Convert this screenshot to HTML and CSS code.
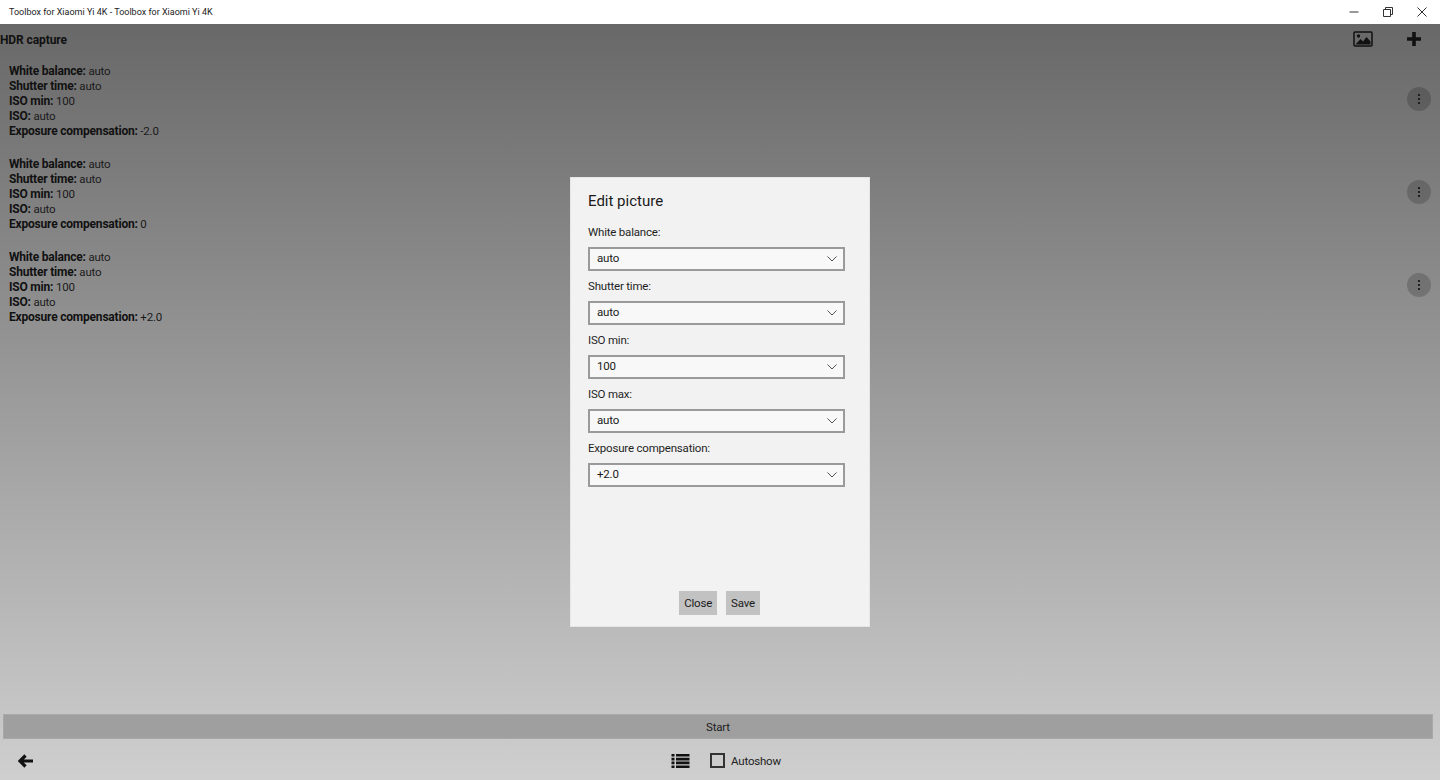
FILE: index.html
```html
<!DOCTYPE html>
<html lang="en">
<head>
<meta charset="utf-8">
<title>Toolbox for Xiaomi Yi 4K</title>
<link rel="stylesheet" href="styles.css">
</head>
<body>
<div class="window">
  <header class="titlebar">
    <span class="title">Toolbox for Xiaomi Yi 4K - Toolbox for Xiaomi Yi 4K</span>
    <div class="caption">
      <svg class="cap" viewBox="0 0 12 12"><path d="M1.5 6h9" /></svg>
      <svg class="cap" viewBox="0 0 12 12"><path d="M1.5 3.5h7v7h-7zM3.5 3.5v-2h7v7h-2" /></svg>
      <svg class="cap" viewBox="0 0 12 12"><path d="M1.5 1.5l9 9M10.5 1.5l-9 9" /></svg>
    </div>
  </header>
  <main class="app">
    <div class="topbar">
      <h1 class="heading">HDR capture</h1>
      <div class="actions">
        <svg class="icon-picture" viewBox="0 0 20 16"><rect x="1" y="1" width="18" height="14" rx="1" class="outline"/><circle cx="5.5" cy="5" r="1.7"/><path d="M2.5 13.5l5-5.5 2.5 2.5 3.5-4.5 4 4.5v3z"/></svg>
        <svg class="icon-plus" viewBox="0 0 14 14"><path d="M5.2 0h3.600v5.200H14v3.600H8.800V14H5.200V8.800H0V5.200h5.200z"/></svg>
      </div>
    </div>
    <section class="list">
      <article class="item">
        <div class="props">
          <div><b>White balance:</b> auto</div>
          <div><b>Shutter time:</b> auto</div>
          <div><b>ISO min:</b> 100</div>
          <div><b>ISO:</b> auto</div>
          <div><b>Exposure compensation:</b> -2.0</div>
        </div>
        <button class="more"><svg viewBox="0 0 4 12"><circle cx="2" cy="2" r="1.1"/><circle cx="2" cy="6" r="1.1"/><circle cx="2" cy="10" r="1.1"/></svg></button>
      </article>
      <article class="item">
        <div class="props">
          <div><b>White balance:</b> auto</div>
          <div><b>Shutter time:</b> auto</div>
          <div><b>ISO min:</b> 100</div>
          <div><b>ISO:</b> auto</div>
          <div><b>Exposure compensation:</b> 0</div>
        </div>
        <button class="more"><svg viewBox="0 0 4 12"><circle cx="2" cy="2" r="1.1"/><circle cx="2" cy="6" r="1.1"/><circle cx="2" cy="10" r="1.1"/></svg></button>
      </article>
      <article class="item">
        <div class="props">
          <div><b>White balance:</b> auto</div>
          <div><b>Shutter time:</b> auto</div>
          <div><b>ISO min:</b> 100</div>
          <div><b>ISO:</b> auto</div>
          <div><b>Exposure compensation:</b> +2.0</div>
        </div>
        <button class="more"><svg viewBox="0 0 4 12"><circle cx="2" cy="2" r="1.1"/><circle cx="2" cy="6" r="1.1"/><circle cx="2" cy="10" r="1.1"/></svg></button>
      </article>
    </section>
    <div class="startbar"><span>Start</span></div>
    <footer class="bottombar">
      <svg class="icon-back" viewBox="0 0 16 14"><path d="M7.500 1.500L2 7l5.500 5.500M3 7h12"/></svg>
      <div class="center">
        <svg class="icon-list" viewBox="0 0 18 14"><path d="M0 0h3v2.600H0zM4.500 0H18v2.600H4.500zM0 3.800h3v2.600H0zM4.500 3.800H18v2.600H4.500zM0 7.600h3v2.600H0zM4.500 7.600H18v2.600H4.500zM0 11.400h3V14H0zM4.500 11.400H18V14H4.500z"/></svg>
        <label class="check"><span class="box"></span>Autoshow</label>
      </div>
    </footer>
  </main>
  <div class="dialog">
    <h2 class="dialog-title">Edit picture</h2>
    <div class="field"><label>White balance:</label><div class="select">auto<svg viewBox="0 0 10 6"><path d="M.5.500L5 5 9.500.5"/></svg></div></div>
    <div class="field"><label>Shutter time:</label><div class="select">auto<svg viewBox="0 0 10 6"><path d="M.5.500L5 5 9.500.5"/></svg></div></div>
    <div class="field"><label>ISO min:</label><div class="select">100<svg viewBox="0 0 10 6"><path d="M.5.500L5 5 9.500.5"/></svg></div></div>
    <div class="field"><label>ISO max:</label><div class="select">auto<svg viewBox="0 0 10 6"><path d="M.5.500L5 5 9.500.5"/></svg></div></div>
    <div class="field"><label>Exposure compensation:</label><div class="select">+2.0<svg viewBox="0 0 10 6"><path d="M.5.500L5 5 9.500.5"/></svg></div></div>
    <div class="dialog-actions">
      <button class="btn">Close</button>
      <button class="btn">Save</button>
    </div>
  </div>
</div>
</body>
</html>
```

FILE: styles.css
```css
* { box-sizing: border-box; }
html, body { margin: 0; padding: 0; }
body { font-family: Roboto, "Open Sans", sans-serif; font-size: 11.500px; letter-spacing: -.2px; color: #1a1a1a; }
.window { position: relative; width: 1440px; height: 780px; overflow: hidden; display: flex; flex-direction: column; }

.titlebar { height: 24px; background: #fff; display: flex; align-items: center; justify-content: space-between; padding-left: 9px; flex: none; }
.title { font-size: 9px; letter-spacing: 0; color: #222; }
.caption { display: flex; align-items: center; gap: 22px; padding-right: 12px; }
.cap { width: 12px; height: 12px; fill: none; stroke: #333; stroke-width: 1; display: block; }

.app { flex: 1; display: flex; flex-direction: column; background: linear-gradient(to bottom, #686868 0%, #cfcfcf 100%); min-height: 0; }
.topbar { height: 30px; display: flex; justify-content: space-between; align-items: center; flex: none; margin-bottom: 10px; }
.heading { margin: 0; padding-top: 2px; font-size: 12px; font-weight: 700; letter-spacing: -.1px; color: #111; }
.actions { display: flex; align-items: center; gap: 34px; padding-right: 19px; }
.icon-picture { width: 20px; height: 16px; fill: #111; }
.icon-picture .outline { fill: none; stroke: #111; stroke-width: 1.500; }
.icon-plus { width: 14px; height: 14px; fill: #111; }

.list { flex: 1; display: flex; flex-direction: column; gap: 18px; min-height: 0; }
.item { height: 75px; display: flex; align-items: center; justify-content: space-between; padding: 0 9px; flex: none; }
.props { line-height: 15px; margin-bottom: 1px; color: #1a1a1a; }
.props b { font-size: 12px; font-weight: 700; letter-spacing: -.2px; color: #111; }
.more { width: 24px; height: 24px; margin-bottom: 6px; padding: 0; border: 0; border-radius: 50%; background: rgba(0, 0, 0, .18); display: flex; align-items: center; justify-content: center; }
.more svg { width: 4px; height: 12px; fill: #111; display: block; }

.startbar { height: 25px; margin: 0 7px 0 3px; padding-top: 1px; background: #9f9f9f; border: 1px solid #a8a8a8; display: flex; align-items: center; justify-content: center; flex: none; color: #1c1c1c; }
.bottombar { height: 41px; position: relative; display: flex; align-items: center; justify-content: center; padding: 2px 0 0 12px; flex: none; }
.icon-back { position: absolute; left: 18px; top: 15px; width: 16px; height: 14px; fill: none; stroke: #111; stroke-width: 3.200; }
.center { display: flex; align-items: center; gap: 20px; }
.icon-list { width: 19px; height: 14px; fill: #111; }
.check { display: flex; align-items: center; gap: 6px; color: #222; }
.box { width: 15px; height: 15px; border: 2px solid #333; display: block; }

.dialog { position: absolute; left: 570px; top: 177px; width: 300px; height: 450px; background: #f2f2f2; border: 1px solid #e6e6e6; padding: 13px 25px 11px 17px; display: flex; flex-direction: column; }
.dialog-title { margin: 0 0 11px; font-size: 15px; line-height: 20px; font-weight: 400; letter-spacing: 0; color: #1a1a1a; }
.field { display: flex; flex-direction: column; height: 54px; }
.field label { line-height: 20px; height: 25px; color: #1f1f1f; }
.select { height: 24px; width: 257px; background: #f8f8f8; border: 2px solid #9a9a9a; padding: 0 6px 2px 7px; display: flex; align-items: center; justify-content: space-between; color: #1a1a1a; }
.select svg { width: 10px; height: 6px; margin-top: 2px; fill: none; stroke: #555; stroke-width: 1; }
.dialog-actions { margin-top: auto; display: flex; justify-content: center; gap: 9px; padding-left: 7px; }
.btn { height: 24px; padding: 0 5px; border: 0; background: #c2c2c2; font: inherit; letter-spacing: inherit; color: #1a1a1a; }
```
